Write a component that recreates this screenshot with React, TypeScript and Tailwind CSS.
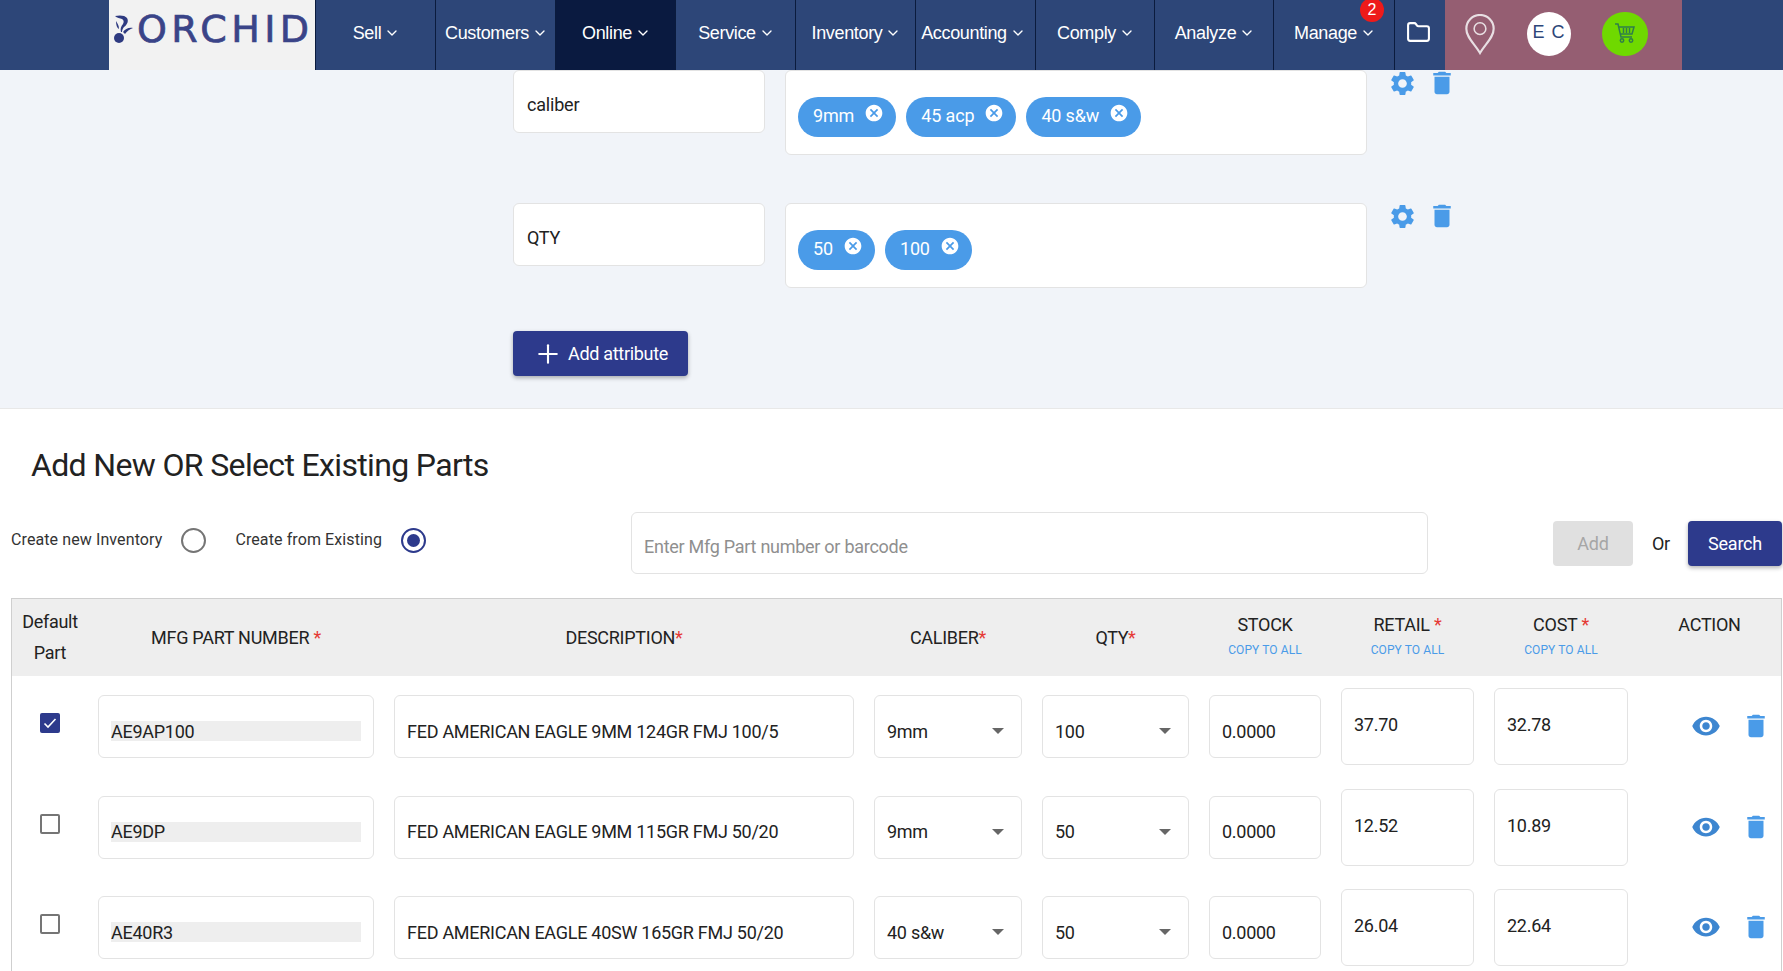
import { ChevronDown, Folder, Plus } from "lucide-react";
import { MdCancel, MdDelete, MdSettings, MdVisibility } from "react-icons/md";

const navItems = [
  { label: "Sell", width: "w-[120px]" },
  { label: "Customers", width: "w-[120px]" },
  { label: "Online", width: "w-[120px]", active: true },
  { label: "Service", width: "w-[120px]" },
  { label: "Inventory", width: "w-[120px]" },
  { label: "Accounting", width: "w-[120px] pr-[6px]" },
  { label: "Comply", width: "w-[119px]" },
  { label: "Analyze", width: "w-[119px]" },
  { label: "Manage", width: "w-[121px]", badge: "2" },
];

const parts = [
  { mfg: "AE9AP100", desc: "FED AMERICAN EAGLE 9MM 124GR FMJ 100/5", caliber: "9mm", qty: "100", retail: "37.70", cost: "32.78", checked: true },
  { mfg: "AE9DP", desc: "FED AMERICAN EAGLE 9MM 115GR FMJ 50/20", caliber: "9mm", qty: "50", retail: "12.52", cost: "10.89" },
  { mfg: "AE40R3", desc: "FED AMERICAN EAGLE 40SW 165GR FMJ 50/20", caliber: "40 s&w", qty: "50", retail: "26.04", cost: "22.64" },
];

const gridCols = "grid grid-cols-[66px_276px_460px_148px_147px_112px_133px_134px_1fr] gap-x-5";
const boxCls = "rounded-md border border-[#e3e3e3] bg-white";

function OrchidLogo() {
  return (
    <div className="w-[206px] h-full bg-[#f2f2f2] flex items-center pl-[5px] pb-[13px]">
      <svg viewBox="0 0 19 28" className="w-[19px] h-[28px]" fill="#2e3a80">
        <path d="M1 1c4-1 10-1 12 2 2 3 0 7-3 9-1 1-2 3-2 5H7c-1-3 0-6 2-8 1-2 1-4-1-5-2-1-5-1-7-3z" />
        <path d="M9 17c2-3 6-5 10-4-3 1-6 3-8 6z" />
        <path d="M2 6c1 2 3 4 3 8-2-1-3-4-3-8z" />
        <circle cx="5" cy="23" r="5" />
      </svg>
      <span className="ml-[4px] font-['DejaVu_Sans',sans-serif] text-[38px] leading-none tracking-[4.4px] [-webkit-text-stroke:0.7px_#3a4488] text-[#3a4488]">ORCHID</span>
    </div>
  );
}

function CartIcon() {
  return (
    <svg viewBox="0 0 24 24" className="w-[24px] h-[24px] mb-[2px]" fill="none" stroke="#2f7d4a" strokeWidth="1.5">
      <path d="M2 3h3l3 13h11" />
      <path d="M6 6h15l-2 7H8" />
      <path d="M10.5 7v5M13.5 7v5M16.5 7v5" />
      <circle cx="9" cy="19.5" r="1.7" />
      <circle cx="18" cy="19.5" r="1.7" />
    </svg>
  );
}

function NavBar() {
  return (
    <nav className="h-[70px] bg-[#2d4678] flex pl-[109px] font-['Liberation_Sans',sans-serif] text-white">
      <OrchidLogo />
      {navItems.map((item) => (
        <div
          key={item.label}
          className={`${item.width} relative flex items-center justify-center gap-[3px] pl-[2px] pb-[4px] border-l border-[#0b1b3d] text-[18px] tracking-[-0.35px] ${item.active ? "bg-[#0a1a40]" : ""}`}
        >
          {item.label}
          <ChevronDown className="w-[16px] h-[16px]" strokeWidth={2} />
          {item.badge && (
            <span className="absolute top-[-2px] right-[10px] w-[24px] h-[24px] rounded-full bg-[#ee1a1a] flex items-center justify-center text-[16px] tracking-normal">
              {item.badge}
            </span>
          )}
        </div>
      ))}
      <div className="w-[51px] flex items-center justify-center pr-[3px] pb-[5px] border-l border-[#0b1b3d]">
        <Folder className="w-[25px] h-[25px]" strokeWidth={2} />
      </div>
      <div className="w-[237px] bg-[#955e72] flex items-center pl-[19px] pb-[2px]">
        <svg viewBox="0 0 32 42" className="w-[32px] h-[41px]" fill="none" stroke="#e8dfe3" strokeWidth="2.2">
          <path d="M16 40C10 30 2 24 2 15a14 14 0 0 1 28 0c0 9-8 15-14 25z" />
          <circle cx="16" cy="15" r="6" strokeWidth="1.6" />
        </svg>
        <div className="ml-[31px] w-[44px] h-[44px] pb-[4px] rounded-full bg-white flex items-center justify-center text-[18px] text-[#2d4678] tracking-[1px]">
          E C
        </div>
        <div className="ml-[31px] w-[46px] h-[44px] rounded-full bg-[#6fd900] flex items-center justify-center">
          <CartIcon />
        </div>
      </div>
    </nav>
  );
}

function Chip({ label }: { label: string }) {
  return (
    <span className="h-10 rounded-full bg-[#4a9be8] text-white text-[18px] tracking-[-0.15px] flex items-start pl-[15px] pr-[12px] pt-[7px] leading-[24px]">
      {label}
      <MdCancel className="w-[20px] h-[20px] ml-[10px] mt-[-1px]" />
    </span>
  );
}

function AttributeRow({ name, values }: { name: string; values: string[] }) {
  return (
    <div className="flex items-start">
      <div className={`${boxCls} w-[252px] h-[63px] flex items-center px-[13px] pt-[6px] text-[18px] tracking-[-0.2px] text-[#222]`}>{name}</div>
      <div className={`${boxCls} ml-5 w-[582px] h-[85px] flex items-start gap-[10px] px-3 pt-[26px]`}>
        {values.map((v) => (
          <Chip key={v} label={v} />
        ))}
      </div>
      <MdSettings className="w-[29px] h-[29px] ml-[21px] mt-[-1px] text-[#4a9be8]" />
      <MdDelete className="w-[30px] h-[30px] ml-[10px] mt-[-2px] text-[#4a9be8]" />
    </div>
  );
}

function Required() {
  return <span className="text-[#e53935]">*</span>;
}

function SelectBox({ value }: { value: string }) {
  return (
    <div className={`${boxCls} h-[63px] mt-[7px] flex items-center justify-between pl-3 pr-[17px] pt-[9px]`}>
      {value}
      <span className="w-0 h-0 border-x-[6px] border-x-transparent border-t-[6px] border-t-[#666]" />
    </div>
  );
}

function PartRow({ part }: { part: (typeof parts)[number] }) {
  return (
    <div className={`${gridCols} h-[100.5px] items-start text-[18px] tracking-[-0.27px] text-[#222]`}>
      <div className="-mr-[10px] mt-[25px] flex justify-center">
        {part.checked ? (
          <svg viewBox="0 0 20 20" className="w-5 h-5">
            <rect width="20" height="20" rx="2" fill="#2d3a8c" />
            <path d="M4.5 10.5l3.5 3.5 7.5-8" fill="none" stroke="#fff" strokeWidth="1.6" />
          </svg>
        ) : (
          <span className="w-5 h-5 rounded-[2px] border-2 border-[#757575]" />
        )}
      </div>
      <div className={`${boxCls} h-[63px] mt-[7px] flex items-center px-3 pt-[9px]`}>
        <span className="w-full h-5 bg-[#eeeeee] flex items-center">{part.mfg}</span>
      </div>
      <div className={`${boxCls} h-[63px] mt-[7px] flex items-center px-3 pt-[9px]`}>{part.desc}</div>
      <SelectBox value={part.caliber} />
      <SelectBox value={part.qty} />
      <div className={`${boxCls} h-[63px] mt-[7px] flex items-center px-3 pt-[9px]`}>0.0000</div>
      <div className={`${boxCls} h-[77px] flex items-center px-3 pb-[4px]`}>{part.retail}</div>
      <div className={`${boxCls} h-[77px] flex items-center px-3 pb-[4px]`}>{part.cost}</div>
      <div className="flex items-center pl-[43px] h-[77px] pb-[1px]">
        <MdVisibility className="w-[30px] h-[30px] text-[#3d86d0]" />
        <MdDelete className="w-[30px] h-[30px] ml-5 text-[#4a9be8]" />
      </div>
    </div>
  );
}

function HeaderCell({ label, required, copy }: { label: string; required?: "gap" | "tight"; copy?: boolean }) {
  return (
    <div className="text-center">
      <div className={`leading-[24px] ${copy ? "" : "mt-[27px]"}`}>
        {label}
        {required === "gap" && " "}
        {required && <Required />}
      </div>
      {copy && <div className="mt-[3px] text-[12px] tracking-[0.1px] leading-[20px] text-[#4a9be8]">COPY TO ALL</div>}
    </div>
  );
}

function PartsTable() {
  return (
    <div className="ml-[11px] w-[1771px] border-x border-t border-[#cfcfcf]">
      <div className={`${gridCols} h-[77px] bg-[#eeeeee] text-[18px] tracking-[-0.27px] text-[#222]`}>
        <div className="-mr-[10px] text-center leading-[31px] pt-[7px]">
          Default
          <br />
          Part
        </div>
        <HeaderCell label="MFG PART NUMBER" required="gap" />
        <HeaderCell label="DESCRIPTION" required="tight" />
        <HeaderCell label="CALIBER" required="tight" />
        <HeaderCell label="QTY" required="tight" />
        <div className="pt-[14px]"><HeaderCell label="STOCK" copy /></div>
        <div className="pt-[14px]"><HeaderCell label="RETAIL" required="gap" copy /></div>
        <div className="pt-[14px]"><HeaderCell label="COST" required="gap" copy /></div>
        <div className="pt-[14px] pr-[10px] text-center leading-[24px]">ACTION</div>
      </div>
      <div className="pt-[12px]">
        {parts.map((p) => (
          <PartRow key={p.mfg} part={p} />
        ))}
      </div>
    </div>
  );
}

export default function App() {
  return (
    <div className="h-[971px] overflow-hidden bg-white font-['Roboto',sans-serif]">
      <NavBar />

      {/* Attributes */}
      <section className="h-[339px] bg-[#f1f4f9] border-b border-[#e8e8e8] pl-[513px]">
        <div className="flex flex-col gap-[48px]">
          <AttributeRow name="caliber" values={["9mm", "45 acp", "40 s&w"]} />
          <AttributeRow name="QTY" values={["50", "100"]} />
        </div>
        <button className="mt-[43px] w-[175px] h-[45px] rounded-[4px] bg-[#2d3a8c] text-white text-[18px] tracking-[-0.3px] flex items-center justify-center gap-[5px] shadow-[0_2px_4px_rgba(0,0,0,0.3)]">
          <Plus className="w-[30px] h-[30px]" strokeWidth={1.7} />
          Add attribute
        </button>
      </section>

      {/* Parts */}
      <h2 className="pl-[31px] pt-[36px] text-[32px] leading-[40px] tracking-[-0.65px] text-[#222]">Add New OR Select Existing Parts</h2>

      <div className="relative flex items-start mt-[27px] h-[86px]">
        <div className="flex items-center h-[56px] pl-[11px] text-[16px] tracking-[0.1px] text-[#333]">
          <span>Create new Inventory</span>
          <span className="ml-[19px] w-[25px] h-[25px] rounded-full border-2 border-[#757575]" />
          <span className="ml-[29px]">Create from Existing</span>
          <span className="ml-[19px] w-[25px] h-[25px] rounded-full border-2 border-[#2d3a8c] flex items-center justify-center">
            <span className="w-[13px] h-[13px] rounded-full bg-[#2d3a8c]" />
          </span>
        </div>
        <div className={`${boxCls} absolute left-[631px] w-[797px] h-[62px] flex items-center px-3 pt-[6px] text-[18px] tracking-[-0.27px] text-[#8f8f8f]`}>
          Enter Mfg Part number or barcode
        </div>
        <div className="ml-auto flex items-center text-[18px] tracking-[-0.2px] mt-[9px]">
          <button className="w-[80px] h-[45px] rounded-[4px] bg-[#e0e0e0] text-[#a6a6a6]">Add</button>
          <span className="ml-[19px] text-[#222]">Or</span>
          <button className="ml-[18px] w-[94px] h-[45px] rounded-[4px] bg-[#2d3a8c] text-white shadow-[0_2px_4px_rgba(0,0,0,0.3)]">Search</button>
          <span className="w-px" />
        </div>
      </div>

      <PartsTable />
    </div>
  );
}
